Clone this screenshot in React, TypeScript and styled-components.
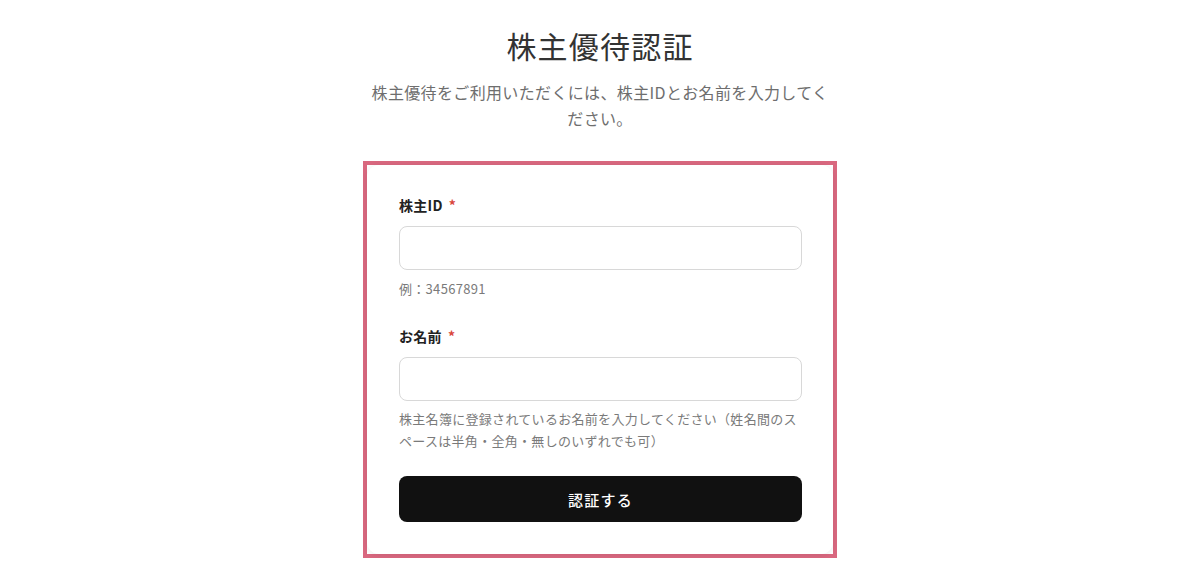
import React from "react";
import styled, { createGlobalStyle } from "styled-components";

const Global = createGlobalStyle`
  html, body { margin: 0; padding: 0; background: #fff; }
  body {
    font-family: "Noto Sans CJK JP", "Noto Sans", sans-serif;
    color: #333;
    -webkit-font-smoothing: antialiased;
  }
  * { box-sizing: border-box; }
`;

const Page = styled.main`
  display: flex;
  flex-direction: column;
  align-items: center;
  padding-top: 24px;
`;

const Title = styled.h1`
  margin: 0;
  font-size: 30px;
  line-height: 42px;
  font-weight: 400;
  letter-spacing: 1.2px;
  color: #333;
`;

const Lead = styled.p`
  margin: 13px 0 0;
  width: 470px;
  text-align: center;
  font-size: 16px;
  line-height: 26px;
  letter-spacing: 0.35px;
  color: #6e6e6e;
`;

const Highlight = styled.div`
  margin-top: 30px;
  width: 474px;
  border: 4px solid #d9687f;
`;

const Card = styled.form`
  display: flex;
  flex-direction: column;
  background: #fff;
  border-radius: 12px;
  box-shadow: 0 1px 6px rgba(0, 0, 0, 0.08);
  padding: 30px 31px 32px 32px;
`;

const Field = styled.div<{ $gap?: number }>`
  display: flex;
  flex-direction: column;
  margin-top: ${(p) => p.$gap ?? 0}px;
`;

const Label = styled.label`
  font-size: 14px;
  line-height: 20px;
  font-weight: 700;
  color: #222;
  letter-spacing: 0.3px;
`;

const Required = styled.span`
  color: #d9463c;
  margin-left: 6px;
`;

const Input = styled.input`
  margin-top: 11px;
  height: 44px;
  width: 100%;
  border: 1px solid #d8d8d8;
  border-radius: 8px;
  padding: 0 14px;
  font: inherit;
  font-size: 15px;
  outline: none;
  background: #fff;
`;

const Hint = styled.p<{ $top: number }>`
  margin: ${(p) => p.$top}px 0 0;
  font-size: 13px;
  line-height: 22px;
  letter-spacing: 0.3px;
  color: #7a7a7a;
`;

const Submit = styled.button`
  margin-top: 24px;
  height: 46px;
  width: 100%;
  border: none;
  border-radius: 8px;
  background: #111;
  color: #fff;
  font: inherit;
  font-size: 15px;
  font-weight: 500;
  letter-spacing: 1.3px;
  cursor: pointer;
`;

export default function App() {
  return (
    <>
      <Global />
      <Page>
        <Title>株主優待認証</Title>
        <Lead>株主優待をご利用いただくには、株主IDとお名前を入力してください。</Lead>
        <Highlight>
          <Card onSubmit={(e) => e.preventDefault()}>
            <Field>
              <Label>
                株主ID<Required>*</Required>
              </Label>
              <Input type="text" />
              <Hint $top={8}>例：34567891</Hint>
            </Field>
            <Field $gap={26}>
              <Label>
                お名前<Required>*</Required>
              </Label>
              <Input type="text" />
              <Hint $top={7}>
                株主名簿に登録されているお名前を入力してください（姓名間のスペースは半角・全角・無しのいずれでも可）
              </Hint>
            </Field>
            <Submit type="submit">認証する</Submit>
          </Card>
        </Highlight>
      </Page>
    </>
  );
}
